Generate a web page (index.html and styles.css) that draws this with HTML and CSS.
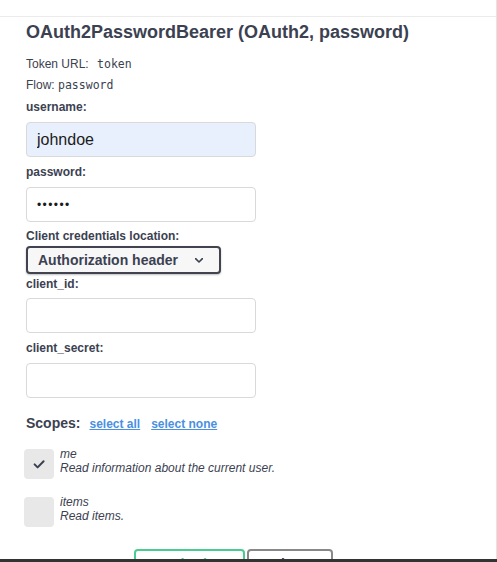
FILE: index.html
```html
<!DOCTYPE html>
<html lang="en">
<head>
<meta charset="utf-8">
<title>Authorize</title>
<link rel="stylesheet" href="styles.css">
</head>
<body>
<div class="page">
  <div class="modal">
    <div class="modal-header"></div>
    <div class="content">
      <h4 class="title">OAuth2PasswordBearer (OAuth2, password)</h4>
      <p class="info info-token">Token URL: <code class="code code-token">token</code></p>
      <p class="info info-flow">Flow: <code class="code">password</code></p>

      <label class="field-label lbl-user" for="username">username:</label>
      <input id="username" class="field field-filled in-user" type="text" value="johndoe">

      <label class="field-label lbl-pass" for="password">password:</label>
      <input id="password" class="field field-pass in-pass" type="password" value="secret">

      <label class="field-label lbl-loc">Client credentials location:</label>
      <div class="select">
        <span class="select-text">Authorization header</span>
        <svg class="chevron" width="8" height="5" viewBox="0 0 8 5"><path d="M0.6 0.6 L4 4 L7.4 0.6" fill="none" stroke="#3b4151" stroke-width="1.6" stroke-linecap="round" stroke-linejoin="round"/></svg>
      </div>

      <label class="field-label lbl-id" for="client_id">client_id:</label>
      <input id="client_id" class="field in-id" type="text" value="">

      <label class="field-label lbl-secret" for="client_secret">client_secret:</label>
      <input id="client_secret" class="field in-secret" type="text" value="">

      <div class="scopes-row">
        <span class="scopes-title">Scopes:</span>
        <a class="scope-link" href="#">select all</a>
        <a class="scope-link" href="#">select none</a>
      </div>

      <div class="scope scope-first">
        <span class="checkbox">
          <svg width="30" height="30" viewBox="0 0 30 30"><path d="M10.6 15.4 L13.6 18.4 L19.6 12.2" fill="none" stroke="#3b4151" stroke-width="2" stroke-linecap="round" stroke-linejoin="round"/></svg>
        </span>
        <div class="scope-text">
          <div class="scope-name">me</div>
          <div class="scope-desc">Read information about the current user.</div>
        </div>
      </div>

      <div class="scope scope-second">
        <span class="checkbox"></span>
        <div class="scope-text">
          <div class="scope-name">items</div>
          <div class="scope-desc">Read items.</div>
        </div>
      </div>

      <div class="buttons">
        <button class="btn btn-authorize" type="button">Authorize</button>
        <button class="btn btn-close" type="button">Close</button>
      </div>
    </div>
  </div>
  <div class="bottom-bar"></div>
</div>
</body>
</html>
```

FILE: styles.css
```css
html, body {
  margin: 0;
  padding: 0;
  background: #ffffff;
}

body {
  font-family: "Liberation Sans", Arial, sans-serif;
  color: #3b4151;
  overflow: hidden;
}

.page {
  width: 497px;
  height: 562px;
  display: flex;
  flex-direction: column;
}

.modal {
  box-sizing: border-box;
  width: 497px;
  height: 559px;
  border-right: 1px solid #e4e4e4;
  background: #ffffff;
  overflow: hidden;
}

.modal-header {
  height: 16px;
  border-bottom: 1px solid #ebebeb;
}

.content {
  display: flex;
  flex-direction: column;
  align-items: flex-start;
  padding-left: 26px;
}

.title {
  margin: 4px 0 0;
  font-size: 18px;
  line-height: 22px;
  font-weight: 700;
  color: #3b4151;
}

.info {
  margin: 0;
  font-size: 12px;
  line-height: 16px;
}

.info-token { margin-top: 13px; }
.info-flow { margin-top: 5px; }

.code {
  font-family: "DejaVu Sans Mono", "Liberation Mono", monospace;
  font-size: 11.5px;
  color: #3b4151;
}

.code-token { margin-left: 5px; }

.field-label {
  display: block;
  font-size: 12px;
  line-height: 15px;
  font-weight: 700;
}

.lbl-user { margin-top: 7px; }
.lbl-pass { margin-top: 8px; }
.lbl-loc { margin-top: 7px; }
.lbl-id { margin-top: 3px; }
.lbl-secret { margin-top: 8px; }

.field {
  box-sizing: border-box;
  width: 230px;
  height: 35px;
  margin: 0;
  padding: 0 10px;
  border: 1px solid #d9d9d9;
  border-radius: 4px;
  background: #ffffff;
  font-family: "Liberation Sans", Arial, sans-serif;
  font-size: 16px;
  color: #1b1b1b;
  outline: none;
}

.field-filled { background: #e8f0fe; }

.field-pass {
  font-size: 12px;
  letter-spacing: 1.4px;
}

.in-user { margin-top: 7px; }
.in-pass { margin-top: 7px; }
.in-id { margin-top: 6px; }
.in-secret { margin-top: 7px; }

.select {
  box-sizing: border-box;
  margin-top: 2px;
  width: 195px;
  height: 28px;
  display: flex;
  align-items: center;
  justify-content: space-between;
  padding: 0 16px 0 10px;
  border: 2px solid #41444e;
  border-radius: 4px;
  background: #f7f7f7;
  box-shadow: 0 1px 2px 0 rgba(0, 0, 0, 0.25);
}

.select-text {
  font-size: 14px;
  line-height: 17px;
  font-weight: 700;
  color: #3b4151;
}

.chevron { display: block; margin-top: 1px; }

.scopes-row {
  margin-top: 16px;
  display: flex;
  align-items: baseline;
  line-height: 18px;
}

.scopes-title {
  font-size: 14px;
  font-weight: 700;
  margin-right: 9px;
}

.scope-link {
  font-size: 12px;
  font-weight: 700;
  color: #4990e2;
  text-decoration: underline;
  margin-right: 11px;
}

.scope {
  display: flex;
  align-items: flex-start;
  margin-left: -2px;
}

.scope-first { margin-top: 14px; }
.scope-second { margin-top: 16px; }

.checkbox {
  display: block;
  width: 30px;
  height: 30px;
  margin-top: 2px;
  border-radius: 4px;
  background: #e8e8e8;
  flex: none;
}

.checkbox svg { display: block; }

.scope-text {
  margin-left: 6px;
  font-size: 12px;
  line-height: 14px;
  font-style: italic;
  color: #3b4151;
}

.buttons {
  margin-top: 22px;
  margin-left: 108px;
  display: flex;
  gap: 2px;
}

.btn {
  box-sizing: border-box;
  height: 31px;
  padding: 5px 0;
  border-radius: 4px;
  background: transparent;
  font-family: "Liberation Sans", Arial, sans-serif;
  font-size: 14px;
  line-height: 17px;
  font-weight: 700;
  text-align: center;
}

.btn-authorize {
  width: 111px;
  border: 2px solid #49cc90;
  color: #49cc90;
}

.btn-close {
  width: 86px;
  border: 2px solid #888888;
  color: #3b4151;
}

.bottom-bar {
  height: 3px;
  background: #333333;
}
```
